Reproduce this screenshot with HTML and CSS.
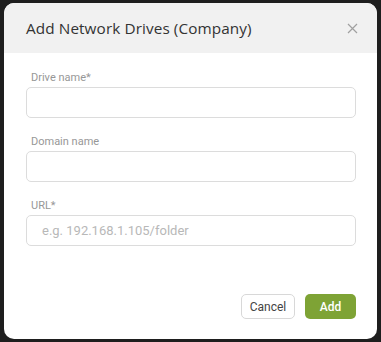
FILE: index.html
```html
<!DOCTYPE html>
<html lang="en">
<head>
    <meta charset="UTF-8">
    <meta name="viewport" content="width=device-width, initial-scale=1.0">
    <title>Add Network Drives</title>
    <link rel="stylesheet" href="styles.css">
</head>
<body>
    <div class="modal">
        <div class="modal-header">
            <h2>Add Network Drives (Company)</h2>
            <button class="close-btn" aria-label="Close">
                <svg width="11" height="11" viewBox="0 0 11 11">
                    <path d="M1 1L10 10M10 1L1 10" stroke="#a0a0a0" stroke-width="1.2" fill="none"/>
                </svg>
            </button>
        </div>
        <div class="modal-body">
            <div class="field">
                <label for="drive-name">Drive name*</label>
                <input type="text" id="drive-name">
            </div>
            <div class="field">
                <label for="domain-name">Domain name</label>
                <input type="text" id="domain-name">
            </div>
            <div class="field">
                <label for="url">URL*</label>
                <input type="text" id="url" placeholder="e.g. 192.168.1.105/folder">
            </div>
        </div>
        <div class="modal-footer">
            <button class="btn btn-cancel">Cancel</button>
            <button class="btn btn-add">Add</button>
        </div>
    </div>
</body>
</html>
```

FILE: styles.css
```css
body {
    margin: 0;
    padding: 3px 4px;
    background: #1e1e1e;
    font-family: Roboto, Arial, sans-serif;
}

.modal {
    width: 373px;
    height: 336px;
    background: #fff;
    border-radius: 10px;
    overflow: hidden;
    display: flex;
    flex-direction: column;
}

.modal-header {
    height: 50px;
    background: #f1f1f1;
    display: flex;
    align-items: center;
    justify-content: space-between;
    padding: 0 19px 0 22px;
}

.modal-header h2 {
    margin: 0;
    font-family: "Open Sans", sans-serif;
    font-weight: 500;
    font-size: 15.3px;
    color: #333;
    letter-spacing: 0.1px;
}

.close-btn {
    border: none;
    background: none;
    padding: 0;
    width: 11px;
    height: 11px;
    display: flex;
    cursor: pointer;
}

.modal-body {
    padding: 18px 21px 0 22px;
}

.field {
    margin-bottom: 17px;
}

.field label {
    display: block;
    font-size: 11px;
    line-height: 14px;
    color: #979797;
    padding-left: 5px;
    margin-bottom: 2px;
}

.field input {
    display: block;
    width: 100%;
    height: 31px;
    box-sizing: border-box;
    border: 1px solid #dcdcdc;
    border-radius: 5px;
    padding: 0 15px;
    font-family: Roboto, Arial, sans-serif;
    font-size: 13px;
    color: #333;
}

.field input::placeholder {
    color: #b8b8b8;
}

.modal-footer {
    margin-top: auto;
    display: flex;
    justify-content: flex-end;
    gap: 10px;
    padding: 0 21px 20px 0;
}

.btn {
    height: 25px;
    border-radius: 5px;
    font-family: Roboto, Arial, sans-serif;
    font-size: 12px;
    cursor: pointer;
}

.btn-cancel {
    width: 54px;
    background: #fff;
    border: 1px solid #d8d8d8;
    color: #444;
}

.btn-add {
    width: 51px;
    background: #7ea335;
    border: none;
    color: #fff;
    font-weight: 500;
}
```
